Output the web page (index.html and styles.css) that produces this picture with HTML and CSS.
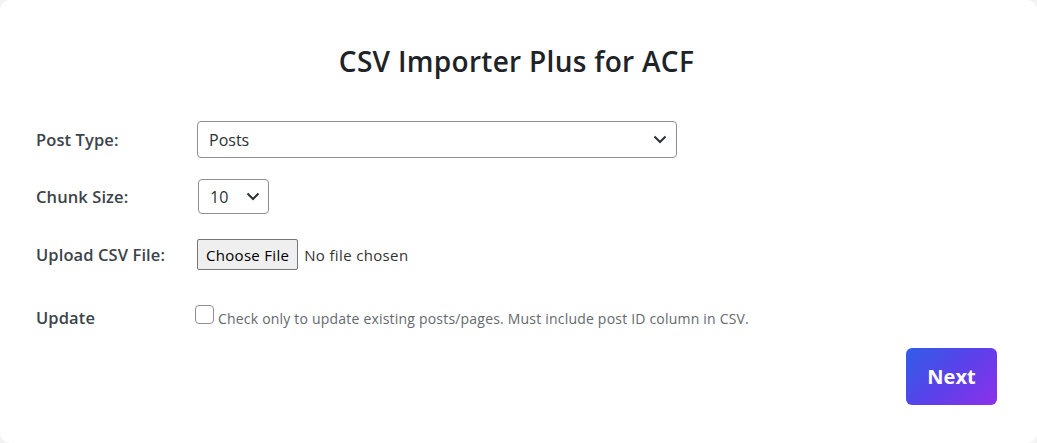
FILE: index.html
```html
<!DOCTYPE html>
<html lang="en">
<head>
<meta charset="utf-8">
<title>CSV Importer Plus for ACF</title>
<link rel="stylesheet" href="styles.css">
</head>
<body>
<div class="card">
  <h1 class="title">CSV Importer Plus for ACF</h1>
  <div class="form">
    <div class="row row-post">
      <div class="label">Post Type:</div>
      <div class="select select-wide">
        <span class="select-value">Posts</span>
        <svg class="chev" width="14" height="9" viewBox="0 0 14 9"><path d="M1.5 1.5 L7 7 L12.5 1.5" fill="none" stroke="#2c3338" stroke-width="2"/></svg>
      </div>
    </div>
    <div class="row row-chunk">
      <div class="label">Chunk Size:</div>
      <div class="select select-small">
        <span class="select-value">10</span>
        <svg class="chev" width="14" height="9" viewBox="0 0 14 9"><path d="M1.5 1.5 L7 7 L12.5 1.5" fill="none" stroke="#2c3338" stroke-width="2"/></svg>
      </div>
    </div>
    <div class="row row-file">
      <div class="label">Upload CSV File:</div>
      <div class="file">
        <span class="file-btn">Choose File</span>
        <span class="file-status">No file chosen</span>
      </div>
    </div>
    <div class="row row-update">
      <div class="label">Update</div>
      <div class="check">
        <span class="checkbox"></span>
        <span class="check-text">Check only to update existing posts/pages. Must include post ID column in CSV.</span>
      </div>
    </div>
    <div class="actions">
      <button class="next">Next</button>
    </div>
  </div>
</div>
</body>
</html>
```

FILE: styles.css
```css
html, body {
  margin: 0;
  padding: 0;
  background: #f3f3f4;
}
body {
  font-family: "Open Sans", "Noto Sans", "Liberation Sans", sans-serif;
  color: #2c3338;
}
.card {
  box-sizing: border-box;
  width: 1037px;
  height: 443px;
  background: #ffffff;
  border-radius: 10px;
  padding: 0 40px 0 36px;
}
.title {
  margin: 0;
  padding-top: 41px;
  height: 79px;
  box-sizing: border-box;
  text-align: center;
  font-size: 28px;
  font-weight: 600;
  color: #1d2327;
  line-height: 40px;
  letter-spacing: 0.3px;
}
.form {
  display: flex;
  flex-direction: column;
  padding-top: 42px;
}
.row {
  display: flex;
  align-items: center;
}
.label {
  width: 161px;
  flex: none;
  font-size: 16.5px;
  font-weight: 600;
  color: #3c434a;
  letter-spacing: 0.1px;
}
.row-post { height: 37px; }
.row-chunk { height: 35px; margin-top: 21px; }
.row-file { height: 31px; margin-top: 25px; }
.row-update { height: 30px; margin-top: 32px; }
.row-update .label { padding-top: 0; }
.select {
  box-sizing: border-box;
  display: flex;
  align-items: center;
  justify-content: space-between;
  border: 1px solid #8c8f94;
  border-radius: 4px;
  background: #fff;
  font-size: 16px;
  color: #2c3338;
}
.select-wide {
  width: 480px;
  height: 37px;
  padding: 0 9px 0 11px;
}
.select-small {
  width: 71px;
  height: 35px;
  margin-left: 1px;
  padding: 0 8px 0 11px;
}
.chev { display: block; }
.file {
  display: flex;
  align-items: center;
  gap: 6px;
}
.file-btn {
  box-sizing: border-box;
  display: flex;
  align-items: center;
  height: 31px;
  padding: 0 8px;
  border: 1px solid #767676;
  border-radius: 2px;
  background: #efefef;
  font-size: 15px;
  color: #000;
  letter-spacing: 0.3px;
}
.file-status {
  font-size: 15px;
  color: #333;
  letter-spacing: 0.35px;
}
.check {
  display: flex;
  align-items: center;
  gap: 4px;
  margin-left: -2px;
}
.checkbox {
  box-sizing: border-box;
  width: 19px;
  height: 19px;
  border: 1px solid #8c8f94;
  border-radius: 4px;
  background: #fff;
  flex: none;
  margin-top: -6px;
}
.check-text {
  font-size: 14px;
  color: #646970;
  padding-top: 2px;
  letter-spacing: 0.2px;
}
.actions {
  display: flex;
  justify-content: flex-end;
  margin-top: 16px;
}
.next {
  width: 91px;
  height: 57px;
  border: none;
  border-radius: 6px;
  background: linear-gradient(135deg, #2f5ee8 0%, #5b41ea 50%, #8c31ea 100%);
  color: #fff;
  font-family: inherit;
  font-size: 20px;
  font-weight: 700;
  letter-spacing: 0;
  padding: 0;
}
```
